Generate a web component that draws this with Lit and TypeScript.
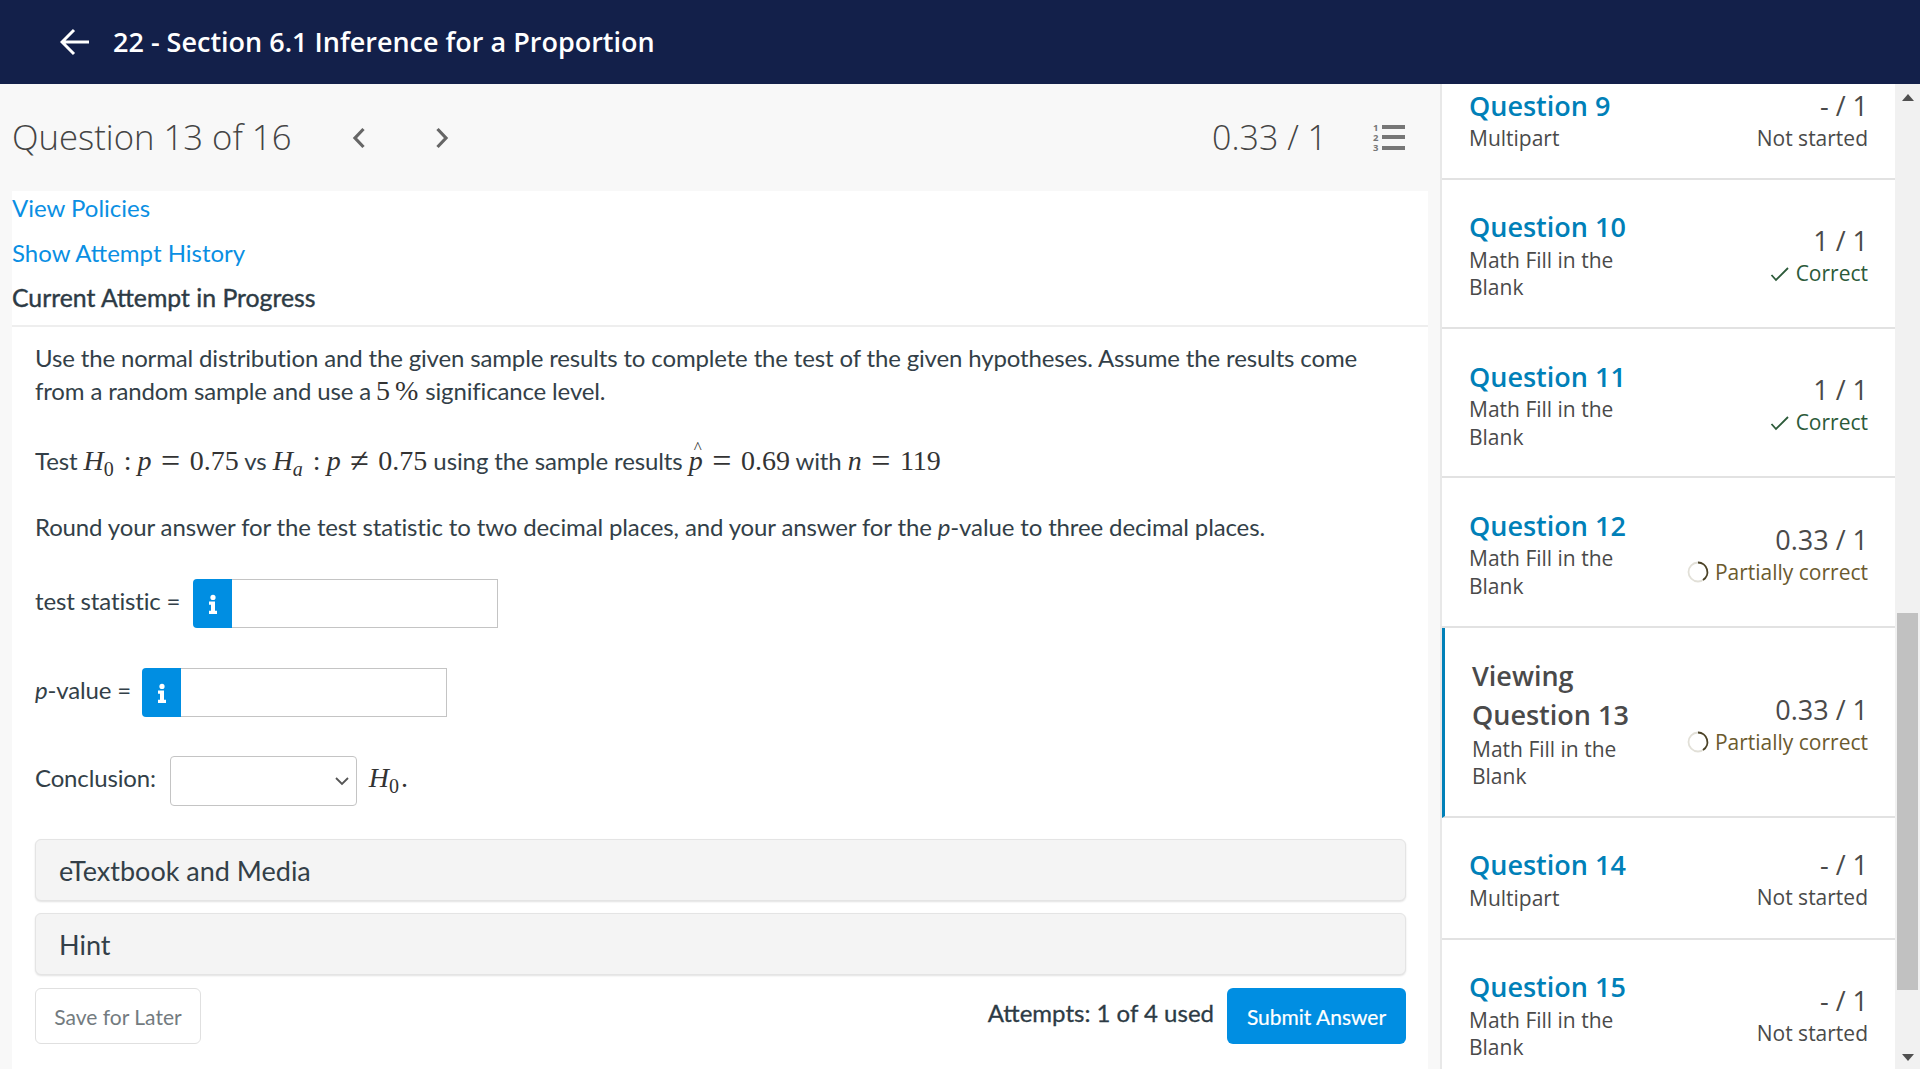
import { LitElement, html, css } from "lit";
import { customElement } from "lit/decorators.js";

type Row = { n: string; type: string; score: string; status: "none" | "ok" | "part"; cur?: boolean };
const rows: Row[] = [
  { n: "Question 9", type: "Multipart", score: "- / 1", status: "none" },
  { n: "Question 10", type: "Math Fill in the Blank", score: "1 / 1", status: "ok" },
  { n: "Question 11", type: "Math Fill in the Blank", score: "1 / 1", status: "ok" },
  { n: "Question 12", type: "Math Fill in the Blank", score: "0.33 / 1", status: "part" },
  { n: "Viewing Question 13", type: "Math Fill in the Blank", score: "0.33 / 1", status: "part", cur: true },
  { n: "Question 14", type: "Multipart", score: "- / 1", status: "none" },
  { n: "Question 15", type: "Math Fill in the Blank", score: "- / 1", status: "none" },
];

const infoIcon = html`<svg class="i" viewBox="0 0 10 20" width="10" height="20"><circle cx="5" cy="3.4" r="2.6" fill="#fff"/><path d="M1 7.5h6v9.2h2V20H1v-3.3h2v-5.9H1z" fill="#fff"/></svg>`;

@customElement("app-root")
export class AppRoot extends LitElement {
  static styles = css`
    :host { display: block; width: 1920px; height: 1069px; overflow: hidden; background: #f8f8f8; font-family: "Lato", sans-serif; color: #2d3b45; }
    * { box-sizing: border-box; }
    .top { height: 84px; background: #13204a; display: flex; align-items: center; padding-left: 60px; color: #fff; }
    .top svg { display: block; margin-right: 23px; }
    .top h1 { margin: 0 0 2px; font: 600 27px/1 "Open Sans", sans-serif; }
    .body { display: flex; height: 985px; }
    .main { width: 1440px; flex: none; padding: 0 12px; }
    .bar { height: 107px; display: flex; align-items: center; color: #444; font-family: "Open Sans", sans-serif; font-size: 34px; font-weight: 300; }
    .bar .q { width: 340px; padding-bottom: 2px; font-size: 34.7px; }
    .bar .nav { display: flex; gap: 69px; }
    .bar .score { margin-left: auto; margin-right: 46px; padding-bottom: 2px; }
    .bar .list { margin-right: 23px; display: block; overflow: visible; }
    .card { background: #fff; height: 878px; }
    .links { display: flow-root; height: 136px; border-bottom: 2px solid #eeeeee; font-size: 24px; line-height: 45px; }
    .links a { display: block; color: #0a8fe3; text-decoration: none; }
    .links a:first-child { margin-top: -6px; }
    .links .cur { color: #2d3b45; font-size: 24.8px; -webkit-text-stroke: 0.4px #2d3b45; }
    .content { padding: 14px 22px 0 23px; font-size: 24px; line-height: 33px; color: #333f48; letter-spacing: -0.15px; }
    .content p { margin: 0; }
    .m { font-family: "Liberation Serif", serif; font-size: 28px; letter-spacing: 0; color: #333; }
    .m sub { font-size: 20px; line-height: 0; vertical-align: -6px; }
    .rel { margin: 0 9.5px; font-size: 34px; line-height: 0; vertical-align: -2px; }
    .col { margin: 0 6px 0 10px; }
    .hat { position: relative; display: inline-block; }
    .hat::before { content: "^"; position: absolute; left: 5px; top: -13px; font-size: 17px; font-style: normal; }
    .five { margin-left: -1px; }
    .pct { margin-left: 5px; }
    .gap { display: inline-block; width: 1px; }
    .dot { margin-left: 2px; }
    .test { margin-top: 37px !important; letter-spacing: -0.1px; }
    .round { margin-top: 33px !important; letter-spacing: -0.13px; }
    .field { display: flex; align-items: center; }
    .lbl { padding-bottom: 7px; }
    .f1 { margin-top: 36px; }
    .f2 { margin-top: 40px; }
    .f3 { margin-top: 39px; }
    .group { display: flex; height: 49px; width: 305px; margin-left: 13px; }
    .f2 .group { margin-left: 11px; }
    .ib { width: 39px; background: #008ee2; border-radius: 4px 0 0 4px; display: flex; align-items: center; justify-content: center; flex: none; }
    .group input { flex: 1; min-width: 0; border: 1px solid #c4c4c4; border-left: 0; background: #fff; margin: 0; padding: 0; outline: none; }
    .sel { position: relative; margin: 0 12px 0 14px; height: 50px; width: 187px; }
    select { display: block; width: 100%; height: 100%; appearance: none; -webkit-appearance: none; border: 1px solid #c4c4c4; border-radius: 4px; background: #fff; font-size: 20px; }
    .sel svg { position: absolute; right: 7px; top: 20px; pointer-events: none; }
    .panel { height: 62px; background: #f4f4f4; border: 1px solid #e4e4e4; border-radius: 6px; box-shadow: 0 1px 2px rgba(0,0,0,.12); display: flex; align-items: center; padding-left: 23px; font-size: 27px; color: #333f48; letter-spacing: 0; }
    .p1 { margin-top: 33px; }
    .p2 { margin-top: 12px; }
    .actions { display: flex; align-items: flex-start; margin-top: 13px; }
    .save { width: 166px; height: 56px; border: 1px solid #e0e0e0; border-radius: 6px; background: #fff; color: #737b80; font: 21px "Lato", sans-serif; padding: 0; }
    .att { margin-left: auto; margin-right: 13px; font-size: 24px; line-height: 50px; color: #2d3b45; -webkit-text-stroke: 0.3px #2d3b45; letter-spacing: 0; }
    .sub { width: 179px; height: 56px; border: 0; border-radius: 6px; background: #008ee2; color: #fff; font: 21px "Lato", sans-serif; -webkit-text-stroke: 0.2px #fff; padding: 0; }
    .side { width: 455px; flex: none; border-left: 2px solid #e8e8e8; background: #fff; overflow: hidden; font-family: "Open Sans", sans-serif; color: #4a4a4a; }
    .rows { margin-top: -26px; }
    .row { display: flex; justify-content: space-between; align-items: flex-start; border-bottom: 2px solid #e2e2e2; padding: 28.5px 27px 25.33px 27px; }
    .row.cur { border-left: 3px solid #0080b8; padding-left: 27px; padding-bottom: 25px; }
    .left { width: 190px; }
    .title { font-size: 27px; font-weight: 600; line-height: 37px; margin-bottom: 1.5px; color: #0080b8; }
    .cur .title { color: #4a4a4a; line-height: 39px; }
    .type { font-size: 21px; line-height: 27.5px; }
    .right { align-self: center; text-align: right; margin-bottom: -4px; }
    .score2 { font-size: 27px; line-height: 33px; }
    .status { font-size: 21px; line-height: 33px; display: flex; align-items: center; justify-content: flex-end; white-space: nowrap; }
    .status.ok { color: #2c5a39; }
    .status.part { color: #6b5a2e; }
    .status svg { margin-right: 6px; display: block; flex: none; }
    .sb { width: 25px; flex: none; background: #f1f1f1; display: flex; flex-direction: column; align-items: center; }
    .arrow { display: block; flex: none; }
    .up { margin-top: 10px; }
    .thumb { width: 21px; height: 377px; background: #c1c1c1; margin-top: 512px; }
    .down { margin-top: 64px; }
  `;

  statusView(r: Row) {
    if (r.status === "ok")
      return html`<div class="status ok"><svg width="20" height="16" viewBox="0 0 20 16"><path d="M1.500 9l4.500 5L18 2" fill="none" stroke="#2c5a39" stroke-width="1.8"/></svg>Correct</div>`;
    if (r.status === "part")
      return html`<div class="status part"><svg width="22" height="22" viewBox="0 0 22 22"><circle cx="11" cy="11" r="9.5" fill="none" stroke="#e2e0d8" stroke-width="1.8"/><path d="M11 1.5A9.5 9.5 0 0 1 16 19" fill="none" stroke="#4b4226" stroke-width="1.8"/></svg>Partially correct</div>`;
    return html`<div class="status">Not started</div>`;
  }

  render() {
    return html`
      <div class="top">
        <svg width="30" height="28" viewBox="0 0 30 28"><path d="M14 2L2 14l12 12M2 14h27" fill="none" stroke="#fff" stroke-width="3"/></svg>
        <h1>22 - Section 6.1 Inference for a Proportion</h1>
      </div>
      <div class="body">
        <div class="main">
          <div class="bar">
            <div class="q">Question 13 of 16</div>
            <div class="nav">
              <svg width="14" height="22" viewBox="0 0 14 22"><path d="M11.500 2L3 11l8.500 9" fill="none" stroke="#666" stroke-width="3.2"/></svg>
              <svg width="14" height="22" viewBox="0 0 14 22"><path d="M2.500 2L11 11l-8.500 9" fill="none" stroke="#666" stroke-width="3.2"/></svg>
            </div>
            <div class="score">0.33 / 1</div>
            <svg class="list" width="32" height="29" viewBox="0 0 32 29">
              <rect x="9" y="2" width="23" height="4" fill="#777"/><rect x="9" y="12" width="23" height="4" fill="#777"/><rect x="9" y="23" width="23" height="4" fill="#777"/>
              <text x="0" y="8" font-family="Open Sans" font-weight="700" font-size="9.500" fill="#777">1</text>
              <text x="0" y="18" font-family="Open Sans" font-weight="700" font-size="9.500" fill="#777">2</text>
              <text x="0" y="28" font-family="Open Sans" font-weight="700" font-size="9.500" fill="#777">3</text>
            </svg>
          </div>
          <div class="card">
            <div class="links">
              <a href="#">View Policies</a>
              <a href="#">Show Attempt History</a>
              <div class="cur">Current Attempt in Progress</div>
            </div>
            <div class="content">
              <p>Use the normal distribution and the given sample results to complete the test of the given hypotheses. Assume the results come from a random sample and use a <span class="m five">5<span class="pct">%</span></span><span class="gap"></span> significance level.</p>
              <p class="test">Test <span class="m"><i>H</i><sub>0</sub><span class="col">:</span><i>p</i><span class="rel">=</span>0.75</span> vs <span class="m"><i>H</i><sub><i>a</i></sub><span class="col">:</span><i>p</i><span class="rel">≠</span>0.75</span> using the sample results <span class="m"><i class="hat">p</i><span class="rel">=</span>0.69</span> with <span class="m"><i>n</i><span class="rel">=</span>119</span></p>
              <p class="round">Round your answer for the test statistic to two decimal places, and your answer for the <i>p</i>-value to three decimal places.</p>
              <div class="field f1"><span class="lbl">test statistic =</span><div class="group"><div class="ib">${infoIcon}</div><input aria-label="test statistic" /></div></div>
              <div class="field f2"><span class="lbl"><i>p</i>-value =</span><div class="group"><div class="ib">${infoIcon}</div><input aria-label="p-value" /></div></div>
              <div class="field f3"><span class="lbl">Conclusion:</span><div class="sel"><select aria-label="conclusion"><option></option></select><svg width="16" height="10" viewBox="0 0 16 10"><path d="M2 2l6 6 6-6" fill="none" stroke="#555" stroke-width="1.800"/></svg></div><span class="m lbl"><i>H</i><sub>0</sub><span class="dot">.</span></span></div>
              <div class="panel p1">eTextbook and Media</div>
              <div class="panel p2">Hint</div>
              <div class="actions">
                <button class="save">Save for Later</button>
                <div class="att">Attempts: 1 of 4 used</div>
                <button class="sub">Submit Answer</button>
              </div>
            </div>
          </div>
        </div>
        <div class="side">
          <div class="rows">
            ${rows.map(
              (r) => html`<div class="row ${r.cur ? "cur" : ""}">
                <div class="left"><div class="title">${r.n}</div><div class="type">${r.type}</div></div>
                <div class="right"><div class="score2">${r.score}</div>${this.statusView(r)}</div>
              </div>`
            )}
          </div>
        </div>
        <div class="sb">
          <svg class="arrow up" width="12" height="7" viewBox="0 0 12 7"><path d="M6 0l6 7H0z" fill="#505050"/></svg>
          <div class="thumb"></div>
          <svg class="arrow down" width="12" height="7" viewBox="0 0 12 7"><path d="M6 7l6-7H0z" fill="#505050"/></svg>
        </div>
      </div>
    `;
  }
}
